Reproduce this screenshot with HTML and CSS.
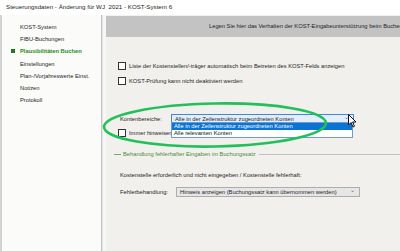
FILE: index.html
```html
<!DOCTYPE html>
<html><head><meta charset="utf-8"><title>Steuerungsdaten</title>
<link rel="stylesheet" href="styles.css"></head>
<body>
<div class="titlebar">Steuerungsdaten - Änderung für WJ&nbsp; 2021 - KOST-System 6</div>
<div class="main">
	<ul class="nav">
		<li>KOST-System</li>
		<li>FIBU-Buchungen</li>
		<li class="on">Plausibilitäten Buchen</li>
		<li>Einstellungen</li>
		<li>Plan-/Vorjahreswerte Einst.</li>
		<li>Notizen</li>
		<li>Protokoll</li>
	</ul>
	<div class="split"></div>
	<div class="content">
		<div class="head"><span>Legen Sie hier das Verhalten der KOST-Eingabeunterstützung beim Buchen fest.</span></div>
		<div class="chk r1"><span class="box"></span>Liste der Kostenstellen/-träger automatisch beim Betreten des KOST-Felds anzeigen</div>
		<div class="chk r2"><span class="box"></span>KOST-Prüfung kann nicht deaktiviert werden</div>
		<div class="row r3">
			<span class="lbl">Kontenbereiche:</span>
			<div class="combo hot">Alle in der Zeilenstruktur zugeordneten Konten<span class="arr">&#8964;</span></div>
		</div>
		<div class="chk r4"><span class="box"></span>Immer hinweisen.</div>
		<ul class="drop">
			<li class="sel">Alle in der Zeilenstruktur zugeordneten Konten</li>
			<li class="alt">Alle relevanten Konten</li>
		</ul>
		<div class="group"><span class="dash"></span><span class="gt">Behandlung fehlerhafter Eingaben im Buchungssatz</span><span class="gl"></span></div>
		<div class="txt">Kostenstelle erforderlich und nicht eingegeben / Kostenstelle fehlerhaft:</div>
		<div class="row r5">
			<span class="lbl">Fehlerbehandlung:</span>
			<div class="combo plain">Hinweis anzeigen (Buchungssatz kann übernommen werden)<span class="arr">&#8964;</span></div>
		</div>
		<svg class="ring" width="240" height="56" viewBox="0 0 240 56"><ellipse cx="114" cy="27" rx="111" ry="21.5" transform="rotate(-1 114 27)"/></svg>
		<svg class="cursor" width="9" height="14" viewBox="0 0 9 14"><path d="M0.5 0.5 L0.5 11 L3 8.5 L5 13 L6.5 12.3 L4.6 8 L8 8 Z"/></svg>
	</div>
</div>
</body></html>
```
FILE: styles.css
```css
body { margin: 0; width: 400px; height: 251px; overflow: hidden; background: #f1f0ec;
	font-family: "Liberation Sans", Arial, sans-serif; font-size: 5.75px; color: #1e1e1e; }
.titlebar { height: 15px; line-height: 14px; background: #fff; padding-left: 6px; font-size: 6.2px; }
.main { display: flex; height: 236px; }
.nav { list-style: none; margin: 0; padding: 6px 0 0 0; width: 99px; flex-shrink: 0; background: #fbfbf9;
	border-left: 2px solid #d3d3d3; }
.nav li { height: 12.2px; line-height: 12px; padding-left: 18px; }
.nav li.on { color: #2a8a22; font-weight: bold; position: relative; }
.nav li.on:before { content: ""; position: absolute; left: 9px; top: 4px; width: 4px; height: 4px; background: #1d7a1d; }
.split { width: 4px; flex-shrink: 0; border-left: 1px solid #c6c6c6; background: #f7f7f5; box-shadow: inset 1px 0 0 #e2e2e2; }
.content { flex: 1; min-width: 0; position: relative; }
.head { margin-top: 1px; height: 21px; line-height: 21px; background: #c3c3c3; padding-left: 103px; white-space: nowrap; overflow: hidden; }
.chk { display: flex; align-items: center; height: 8px; padding-left: 12px; gap: 3px; }
.box { width: 6px; height: 6px; border: 1px solid #333; background: #fff; }
.r1 { margin-top: 25px; }
.r2 { margin-top: 7px; }
.row { display: flex; align-items: center; height: 10px; padding-left: 14px; }
.r3 { margin-top: 29px; }
.r3 .lbl { width: 51px; }
.r5 { margin-top: 8px; }
.r5 .lbl { width: 56px; }
.combo { position: relative; height: 8px; line-height: 8px; padding-left: 3px; }
.combo .arr { position: absolute; right: 4px; top: -2px; color: #666; font-size: 6px; }
.hot { width: 178px; background: #e3eefa; border: 1px solid #3c8ad8; }
.plain { width: 179px; background: #e6e6e6; border: 1px solid #adadad; }
.drop { position: absolute; left: 65px; top: 107px; width: 180px; margin: 0; padding: 0; list-style: none;
	background: #fff; border: 1px solid #6f9bd0; }
.drop li { height: 7px; line-height: 7px; padding-left: 2px; }
.drop li.sel { background: #0a74d4; color: #fff; }
.drop li.alt { color: #111; }
.r4 { margin-top: 5px; }
.group { display: flex; align-items: center; height: 8px; margin-top: 13px; padding-left: 8px; }
.dash { width: 7px; border-top: 1px solid #7fa070; margin-right: 2px; }
.gt { color: #4f8a3a; }
.gl { flex: 1; border-top: 1px solid #c2c2c2; margin-left: 3px; }
.txt { height: 8px; line-height: 8px; margin-top: 13px; padding-left: 14px; }
.ring { position: absolute; left: -5px; top: 83px; fill: none; stroke: #22c05a; stroke-width: 2.6; }
.cursor { position: absolute; left: 242px; top: 99px; fill: #fff; stroke: #111; stroke-width: 1; }
```
